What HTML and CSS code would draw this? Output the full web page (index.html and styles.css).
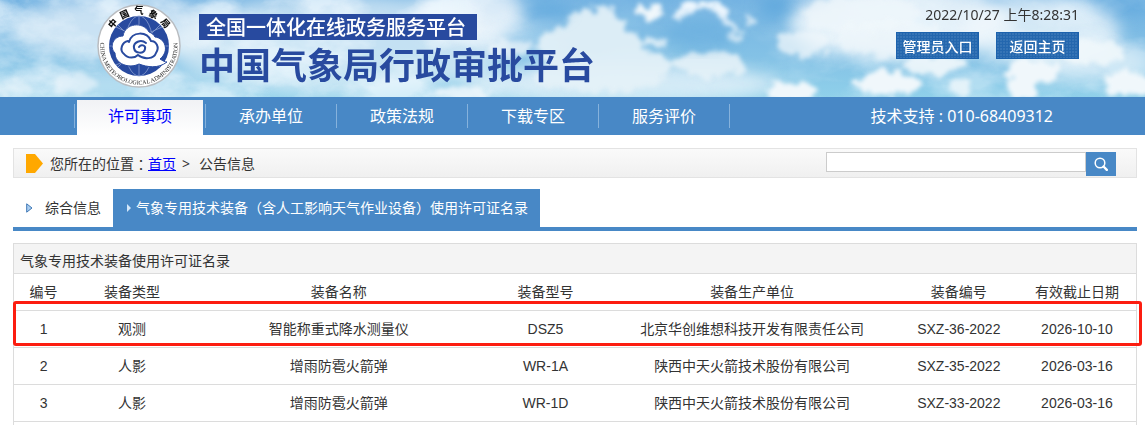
FILE: index.html
```
<!DOCTYPE html>
<html lang="zh-CN">
<head>
<meta charset="utf-8">
<title>中国气象局行政审批平台</title>
<link rel="stylesheet" href="styles.css">
</head>
<body>
<header class="banner">
  <svg class="sky" viewBox="0 0 1145 97" preserveAspectRatio="xMidYMid slice" aria-hidden="true">
    <defs>
      <linearGradient id="skyFill" x1="0" y1="0" x2="0" y2="1">
        <stop offset="0" stop-color="#74b3e2"/>
        <stop offset=".6" stop-color="#84c2e6"/>
        <stop offset="1" stop-color="#8fd0ea"/>
      </linearGradient>
      <linearGradient id="fadeFill" x1="0" y1="0" x2="1" y2="0">
        <stop offset="0" stop-color="#fff"/>
        <stop offset=".38" stop-color="#fff"/>
        <stop offset=".5" stop-color="#222"/>
        <stop offset=".66" stop-color="#222"/>
        <stop offset=".75" stop-color="#999"/>
        <stop offset="1" stop-color="#999"/>
      </linearGradient>
      <mask id="fade"><rect width="1145" height="97" fill="url(#fadeFill)"/></mask>
      <filter id="puff" x="-5%" y="-20%" width="110%" height="140%" color-interpolation-filters="sRGB">
        <feTurbulence type="fractalNoise" baseFrequency="0.09" numOctaves="4" seed="5" result="n"/>
        <feDisplacementMap in="SourceGraphic" in2="n" scale="18" xChannelSelector="R" yChannelSelector="G"/>
        <feGaussianBlur stdDeviation="2"/>
      </filter>
      <filter id="haze" x="-5%" y="-20%" width="110%" height="140%" color-interpolation-filters="sRGB">
        <feGaussianBlur stdDeviation="8"/>
      </filter>
      <filter id="wisps" x="0" y="0" width="100%" height="100%" color-interpolation-filters="sRGB">
        <feTurbulence type="fractalNoise" baseFrequency="0.014 0.024" numOctaves="5" seed="21"/>
        <feColorMatrix values="0 0 0 0 .95  0 0 0 0 .98  0 0 0 0 1  3.2 0 0 0 -1.2"/>
      </filter>
    </defs>
    <rect width="1145" height="97" fill="url(#skyFill)"/>
    <g filter="url(#haze)" fill="#f2f8fc">
      <ellipse cx="120" cy="28" rx="110" ry="30" opacity=".65"/>
      <ellipse cx="90" cy="85" rx="120" ry="16" opacity=".4"/>
      <ellipse cx="340" cy="45" rx="170" ry="50" opacity=".6"/>
      <ellipse cx="470" cy="14" rx="56" ry="28" opacity=".8"/>
      <ellipse cx="620" cy="84" rx="160" ry="20" opacity=".7"/>
      <ellipse cx="900" cy="22" rx="110" ry="38" opacity=".85"/>
      <ellipse cx="1040" cy="30" rx="80" ry="34" opacity=".75"/>
      <ellipse cx="1090" cy="62" rx="60" ry="20" opacity=".5"/>
    </g>
    <g mask="url(#fade)"><rect width="1145" height="97" filter="url(#wisps)" opacity=".65"/></g>
    <g filter="url(#puff)" fill="#f0f7fb">
      <g fill="#e4f1f8" opacity=".92">
        <ellipse cx="596" cy="32" rx="32" ry="24"/>
        <ellipse cx="564" cy="48" rx="27" ry="22"/>
        <ellipse cx="612" cy="52" rx="30" ry="28"/>
        <ellipse cx="640" cy="66" rx="34" ry="15"/>
        <ellipse cx="600" cy="76" rx="66" ry="16"/>
        <ellipse cx="710" cy="64" rx="36" ry="13"/>
      </g>
      <ellipse cx="510" cy="48" rx="22" ry="9" opacity=".7"/>
      <ellipse cx="462" cy="93" rx="26" ry="8" opacity=".85"/>
      <ellipse cx="648" cy="12" rx="13" ry="7"/>
      <ellipse cx="655" cy="42" rx="12" ry="6" opacity=".8"/>
      <path d="M676 18Q688 2 704 5Q726 6 731 32" fill="none" stroke="#f4faff" stroke-width="8"/>
      <ellipse cx="737" cy="36" rx="9" ry="5" opacity=".8"/>
      <ellipse cx="751" cy="20" rx="6" ry="7" opacity=".7"/>
      <ellipse cx="804" cy="43" rx="26" ry="13" opacity=".75"/>
      <ellipse cx="860" cy="14" rx="60" ry="18" opacity=".7"/>
      <ellipse cx="890" cy="38" rx="58" ry="18" opacity=".7"/>
      <ellipse cx="790" cy="92" rx="25" ry="10"/>
      <ellipse cx="888" cy="84" rx="32" ry="12"/>
      <ellipse cx="935" cy="65" rx="32" ry="10" opacity=".9"/>
      <ellipse cx="960" cy="87" rx="13" ry="8" opacity=".8"/>
      <ellipse cx="1034" cy="72" rx="28" ry="13"/>
      <ellipse cx="1022" cy="88" rx="18" ry="10"/>
      <ellipse cx="1092" cy="52" rx="34" ry="12" opacity=".9"/>
      <ellipse cx="1126" cy="84" rx="24" ry="13"/>
      <ellipse cx="75" cy="84" rx="22" ry="9" opacity=".6"/>
      <ellipse cx="12" cy="88" rx="22" ry="8" opacity=".5"/>
    </g>
    <g filter="url(#haze)" fill="#5aa5dc">
      <ellipse cx="545" cy="8" rx="22" ry="10" opacity=".8"/>
      <ellipse cx="700" cy="32" rx="34" ry="16" opacity=".5"/>
      <ellipse cx="775" cy="6" rx="14" ry="12" opacity=".7"/>
      <ellipse cx="1125" cy="4" rx="34" ry="10" opacity=".6"/>
    </g>
  </svg>
  <div class="brand">
    <svg class="emblem" viewBox="0 0 84 84" role="img" aria-label="中国气象局">
      <defs>
        <path id="arcTop" d="M10.500 42 A31.500 31.500 0 0 1 73.500 42"/>
        <path id="arcBottom" d="M4 34 A38.800 38.800 0 1 0 80 34"/>
      </defs>
      <circle cx="42" cy="42" r="41" fill="#fff" stroke="#b9bcc0" stroke-width="1.500"/>
      <circle cx="42" cy="42" r="30" fill="#284a9f"/>
      <g fill="none" stroke="#8aa0d0" stroke-width=".8">
        <path d="M42 12V72M12 42H72M21 21L63 63M63 21L21 63"/>
        <ellipse cx="42" cy="42" rx="14" ry="30"/>
        <path d="M19 23Q42 37 65 23M19 61Q42 47 65 61"/>
      </g>
      <path d="M70 58C61 65 50 63 42 60C32 65 18 60 18 49C12 43 16 32 26 32C28 19 46 17 52 28C55 29 57 31 58 33C68 34 73 47 63 55C66 57 68 58 70 58Z" fill="#fff" stroke="#284a9f" stroke-width="1"/>
      <g fill="none" stroke="#284a9f" stroke-width="2" stroke-linecap="round">
        <path d="M31 37C25 38 22 46 27 50C31 55 38 54 41 51C47 56 57 55 59 49C63 43 59 37 54 37C50 27 35 27 32 38"/>
        <path d="M49 39C44 35 36 38 37 44C38 50 47 50 48 45C49 41 44 40 42 43"/>
      </g>
      <text class="ring-cn"><textPath href="#arcTop" startOffset="50%" text-anchor="middle">中&#8194;国&#8194;气&#8194;象&#8194;局</textPath></text>
      <text class="ring-en"><textPath href="#arcBottom" startOffset="50%" text-anchor="middle">CHINA METEOROLOGICAL ADMINISTRATION</textPath></text>
    </svg>
    <div class="titles">
      <p class="subtitle">全国一体化在线政务服务平台</p>
      <h1 class="title">中国气象局行政审批平台</h1>
    </div>
  </div>
  <div class="tools">
    <time class="clock">2022/10/27 上午8:28:31</time>
    <div class="tool-row">
      <button class="tool" type="button">管理员入口</button>
      <button class="tool" type="button">返回主页</button>
    </div>
  </div>
</header>

<nav class="nav">
  <ul class="menu">
    <li class="menu-item"><a class="menu-link is-current" href="#">许可事项</a></li>
    <li class="menu-item"><a class="menu-link" href="#">承办单位</a></li>
    <li class="menu-item"><a class="menu-link" href="#">政策法规</a></li>
    <li class="menu-item"><a class="menu-link" href="#">下载专区</a></li>
    <li class="menu-item"><a class="menu-link" href="#">服务评价</a></li>
  </ul>
  <p class="support">技术支持 : 010-68409312</p>
</nav>

<main class="content">
  <div class="crumbs">
    <svg class="crumb-mark" viewBox="0 0 17 19" aria-hidden="true"><path d="M0 0H9L17 9.500L9 19H0Z" fill="#ffa800"/></svg>
    <p class="crumb-text">您所在的位置<span class="colon" lang="zh-TW">：</span><a class="home" href="#">首页</a><span class="sep">&gt;</span>公告信息</p>
    <form class="search">
      <input class="search-box" type="text" aria-label="搜索">
      <button class="search-btn" type="button" aria-label="搜索">
        <svg class="lens" viewBox="0 0 14 14"><circle cx="6" cy="6" r="4.800" fill="none" stroke="#fff" stroke-width="1.500"/><path d="M9.500 9.500L12.800 12.800" stroke="#fff" stroke-width="2.400" stroke-linecap="round"/></svg>
      </button>
    </form>
  </div>

  <div class="tabs">
    <a class="tab" href="#"><svg class="tab-mark" viewBox="0 0 7 10" aria-hidden="true"><path d="M.7 .8L6 5L.7 9.200Z" fill="#a9cdf0" stroke="#3f78b5"/></svg>综合信息</a>
    <a class="tab is-active" href="#"><svg class="tab-mark" viewBox="0 0 7 10" aria-hidden="true"><path d="M1 1L5 5L1 9Z" fill="#d3e7fa"/></svg>气象专用技术装备（含人工影响天气作业设备）使用许可证名录</a>
  </div>

  <section class="panel">
    <h2 class="panel-title">气象专用技术装备使用许可证名录</h2>
    <div class="table-wrap">
      <table class="list">
        <colgroup><col class="c1"><col class="c2"><col class="c5"><col class="c2"><col class="c5"><col class="c2"><col class="c2"></colgroup>
        <thead>
          <tr><th>编号</th><th>装备类型</th><th>装备名称</th><th>装备型号</th><th>装备生产单位</th><th>装备编号</th><th>有效截止日期</th></tr>
        </thead>
        <tbody>
          <tr><td>1</td><td>观测</td><td>智能称重式降水测量仪</td><td>DSZ5</td><td>北京华创维想科技开发有限责任公司</td><td>SXZ-36-2022</td><td>2026-10-10</td></tr>
          <tr><td>2</td><td>人影</td><td>增雨防雹火箭弹</td><td>WR-1A</td><td>陕西中天火箭技术股份有限公司</td><td>SXZ-35-2022</td><td>2026-03-16</td></tr>
          <tr><td>3</td><td>人影</td><td>增雨防雹火箭弹</td><td>WR-1D</td><td>陕西中天火箭技术股份有限公司</td><td>SXZ-33-2022</td><td>2026-03-16</td></tr>
        </tbody>
      </table>
      <div class="marker"></div>
    </div>
  </section>
</main>
</body>
</html>
```
FILE: styles.css
```
* { box-sizing: border-box; }
body, h1, h2, p, ul { margin: 0; padding: 0; }
body {
  background: #fff;
  color: #333;
  font: 14px/20px "Noto Sans", "Noto Sans CJK SC", sans-serif;
}
button, input { font: inherit; margin: 0; }

.banner {
  position: relative;
  display: flex;
  justify-content: space-between;
  overflow: hidden;
  padding: 4px 66px 0 97px;
  min-height: 97px;
}
.sky { position: absolute; inset: 0; width: 100%; height: 100%; }
.brand { position: relative; display: flex; gap: 18px; }
.emblem { width: 84px; height: 84px; }
.ring-cn { font: 900 9px "Noto Sans CJK SC", sans-serif; fill: #111; }
.ring-en { font: 6px "Liberation Serif", serif; fill: #222; }
.titles { display: flex; flex-direction: column; align-items: flex-start; padding-top: 10px; }
.subtitle {
  padding: 0 11px 0 7px;
  background: #284a9f;
  color: #fff;
  font: 500 20px/26px "Noto Sans CJK SC", sans-serif;
}
.title { color: #284a9f; font: 700 36px/46px "Noto Sans CJK SC", sans-serif; }
.tools { position: relative; display: flex; flex-direction: column; align-items: flex-end; gap: 7px; }
.clock { line-height: 21px; }
.tool-row { display: flex; gap: 17px; }
.tool {
  width: 83px;
  height: 27px;
  padding: 0;
  border: 1px solid #1c62ad;
  background: #2467ae radial-gradient(circle at 1px 1px, #5f93c8 0, #2467ae 1px) 0 0 / 3px 3px;
  color: #fff;
  font: 500 14px/20px "Noto Sans CJK SC", sans-serif;
}

.nav {
  display: flex;
  justify-content: space-between;
  padding: 3px 92px 0 74px;
  background: #4888c6;
  color: #fff;
  font-size: 16px;
  line-height: 32px;
}
.menu { display: flex; list-style: none; background: linear-gradient(#86b2dc, #86b2dc) right 4px / 1px 24px no-repeat; padding-right: 1px; }
.menu-item {
  width: 131px;
  padding: 0 2px 0 3px;
  background: linear-gradient(#86b2dc, #86b2dc) 0 4px / 1px 24px no-repeat;
}
.menu-link { display: block; height: 35px; color: #fff; text-align: center; text-decoration: none; }
.menu-link.is-current { background: linear-gradient(#f1f2f5, #fff); color: #00f; }

.content { padding: 13px 8px 0 13px; }
.crumbs {
  display: flex;
  align-items: flex-start;
  padding: 3px 20px 1px 12px;
  border: 1px solid #e3e3e3;
  background: linear-gradient(#fafafa, #f0f0f0);
}
.crumb-mark { width: 17px; height: 19px; margin-top: 2px; }
.crumb-text { display: flex; margin-left: 7px; line-height: 24px; }
.colon { font-family: "Noto Sans CJK TC", sans-serif; }
.home { color: #00f; }
.sep { margin: 0 9px 0 6px; }
.search { display: flex; align-items: flex-start; margin-left: auto; }
.search-box { width: 260px; height: 20px; border: 1px solid #ccc; background: #fff; padding: 0 4px; }
.search-btn { display: grid; place-items: center; width: 30px; height: 24px; padding: 0; border: 0; background: #4888c6; }
.lens { width: 14px; height: 14px; }

.tabs { display: flex; margin-top: 11px; border-bottom: 4px solid #4888c6; }
.tab {
  display: flex;
  align-items: center;
  gap: 12px;
  height: 38px;
  padding: 0 12px 0 13px;
  color: #333;
  text-decoration: none;
}
.tab.is-active { gap: 3px; background: #4888c6; color: #fff; }
.tab-mark { width: 7px; height: 10px; }

.panel { margin-top: 12px; padding-bottom: 3px; border: 1px solid #dcdcdc; border-bottom: 0; }
.panel-title {
  padding: 7px 6px 2px;
  border-bottom: 1px solid #dcdcdc;
  background: #f4f4f4;
  font-size: 14px;
  font-weight: 400;
}
.table-wrap { position: relative; }
.list {
  width: 100%;
  border-spacing: 0;
  table-layout: fixed;
  font-family: "Liberation Sans", "Noto Sans CJK SC", sans-serif;
}
.c1 { width: calc(100% / 19); }
.c2 { width: calc(200% / 19); }
.c5 { width: calc(500% / 19); }
.list th, .list td {
  height: 37px;
  padding: 0;
  border-bottom: 1px solid #dcdcdc;
  font-weight: 400;
  text-align: center;
}
.marker {
  position: absolute;
  top: 27px;
  left: -1px;
  right: -6px;
  height: 45px;
  border: 3px solid #fc1d10;
  border-radius: 3px;
}
```
